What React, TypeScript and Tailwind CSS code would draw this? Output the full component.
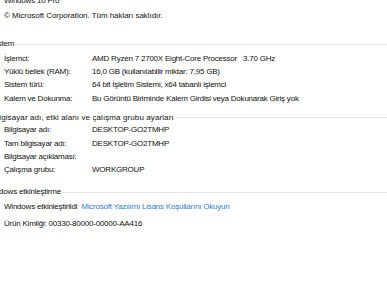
const font = { fontFamily: '"Liberation Sans", Arial, sans-serif' };

const Row = ({ label, value, extra }: { label: string; value?: string; extra?: string }) => (
  <div className="flex h-[13.4px] items-center whitespace-nowrap pl-[4px]">
    <span className="w-[88px] shrink-0">{label}</span>
    <span className="w-[151px] shrink-0">{value}</span>
    {extra && <span>{extra}</span>}
  </div>
);

const Section = ({ title, shift }: { title: string; shift: string }) => (
  <div className="flex h-[14px] items-center overflow-hidden">
    <span className={`whitespace-nowrap ${shift}`}>{title}</span>
    <div className="ml-[2px] h-px flex-1 bg-[#e2e2e2]" />
  </div>
);

export default function App() {
  return (
    <div className="h-[300px] w-[387px] overflow-hidden bg-white text-[8px] tracking-[-0.22px] text-[#111]" style={font}>
      <div className="-mt-[6px] pl-[4px] leading-[14px]">Windows 10 Pro</div>
      <div className="flex h-[15px] items-center pl-[4px] tracking-[-0.05px]">© Microsoft Corporation. Tüm hakları saklıdır.</div>

      <div className="mt-[14px]">
        <Section title="Sistem" shift="-ml-[9px]" />
        <div className="mt-[1px]">
          <Row label="İşlemci:" value="AMD Ryzen 7 2700X Eight-Core Processor" extra="3.70 GHz" />
          <Row label="Yüklü bellek (RAM):" value="16,0 GB (kullanılabilir miktar: 7,95 GB)" />
          <Row label="Sistem türü:" value="64 bit İşletim Sistemi, x64 tabanlı işlemci" />
          <Row label="Kalem ve Dokunma:" value="Bu Görüntü Biriminde Kalem Girdisi veya Dokunarak Giriş yok" />
        </div>
      </div>

      <div className="mt-[5px]">
        <Section title="Bilgisayar adı, etki alanı ve çalışma grubu ayarları" shift="-ml-[8px] tracking-[0.1px]" />
        <div className="mt-[-1px]">
          <Row label="Bilgisayar adı:" value="DESKTOP-GO2TMHP" />
          <Row label="Tam bilgisayar adı:" value="DESKTOP-GO2TMHP" />
          <Row label="Bilgisayar açıklaması:" />
          <Row label="Çalışma grubu:" value="WORKGROUP" />
        </div>
      </div>

      <div className="mt-[8px]">
        <Section title="Windows etkinleştirme" shift="-ml-[14px]" />
        <div className="mt-[1px] flex h-[14px] items-center gap-[4px] pl-[4px]">
          <span>Windows etkinleştirildi</span>
          <span className="text-[#2f80d8]">Microsoft Yazılımı Lisans Koşullarını Okuyun</span>
        </div>
        <div className="mt-[3px] flex h-[14px] items-center gap-[2px] pl-[4px]">
          <span>Ürün Kimliği:</span>
          <span>00330-80000-00000-AA416</span>
        </div>
      </div>
    </div>
  );
}
